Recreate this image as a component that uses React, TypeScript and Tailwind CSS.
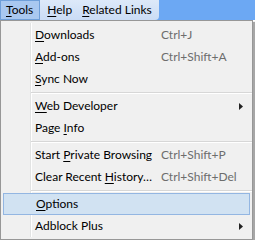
import { ReactNode } from "react";

type Item = {
  label: ReactNode;
  shortcut?: string;
  submenu?: boolean;
  active?: boolean;
};

const u = (ch: string) => <span className="underline underline-offset-2">{ch}</span>;

const groups: Item[][] = [
  [
    { label: <>{u("D")}ownloads</>, shortcut: "Ctrl+J" },
    { label: <>{u("A")}dd-ons</>, shortcut: "Ctrl+Shift+A" },
    { label: <>{u("S")}ync Now</> },
  ],
  [
    { label: <>{u("W")}eb Developer</>, submenu: true },
    { label: <>Page {u("I")}nfo</> },
  ],
  [
    { label: <>Start {u("P")}rivate Browsing</>, shortcut: "Ctrl+Shift+P" },
    { label: <>Clear Recent {u("H")}istory…</>, shortcut: "Ctrl+Shift+Del" },
  ],
  [
    { label: <>{u("O")}ptions</>, active: true },
    { label: <>Adblock Plus</>, submenu: true },
  ],
];

function Arrow() {
  return (
    <svg width="4" height="7" viewBox="0 0 4 7" className="absolute left-[238px] top-[8px]">
      <path d="M0 0 L4 3.5 L0 7 Z" fill="#222" />
    </svg>
  );
}

function MenuRow({ item }: { item: Item }) {
  return (
    <div
      className={
        "relative flex h-[22px] items-center " +
        (item.active
          ? "mx-[2px] border border-[#93b6e2] bg-[#d1e2f2] pl-[32px]"
          : "pl-[34px]")
      }
    >
      <span className="w-[126px] whitespace-nowrap">{item.label}</span>
      {item.shortcut && <span className="whitespace-nowrap text-[#6d6d6d]">{item.shortcut}</span>}
      {item.submenu && <Arrow />}
    </div>
  );
}

export default function App() {
  return (
    <div
      className="h-[240px] w-[255px] overflow-hidden bg-white text-[12px] text-black"
      style={{ fontFamily: 'Lato, "Noto Sans", sans-serif' }}
    >
      <div className="flex h-[20px] bg-[#6ca8f3]">
        <div className="flex w-[159px] items-stretch whitespace-nowrap rounded-br-[4px] bg-[linear-gradient(#dde9f9,#cadcf5)]">
          <div className="flex items-center border border-[#6f9fd9] bg-[#a9c8f0] pl-[5px] pr-[6px]">
            <span>{u("T")}ools</span>
          </div>
          <div className="flex items-center pl-[7px]">
            <span>{u("H")}elp</span>
          </div>
          <div className="flex items-center pl-[10px]">
            <span>{u("R")}elated Links</span>
          </div>
        </div>
      </div>

      <div className="w-[253px] border border-[#979797] bg-[#f0f0f0] shadow-[2px_2px_1px_rgba(0,0,0,0.35)]">
        <div className="my-[2px] bg-[linear-gradient(to_right,#f0f0f0_29px,#e2e3e3_29px,#e2e3e3_30px,#ffffff_30px,#ffffff_31px,#f0f0f0_31px)] pt-[1px]">
          {groups.map((g, gi) => (
            <div key={gi}>
              {gi > 0 && (
                <div className="flex h-[5px] items-center pl-[30px]">
                  <div className="h-[2px] w-full border-t border-b border-t-[#d7d7d7] border-b-white" />
                </div>
              )}
              {g.map((item, ii) => (
                <MenuRow key={ii} item={item} />
              ))}
            </div>
          ))}
        </div>
      </div>
    </div>
  );
}
